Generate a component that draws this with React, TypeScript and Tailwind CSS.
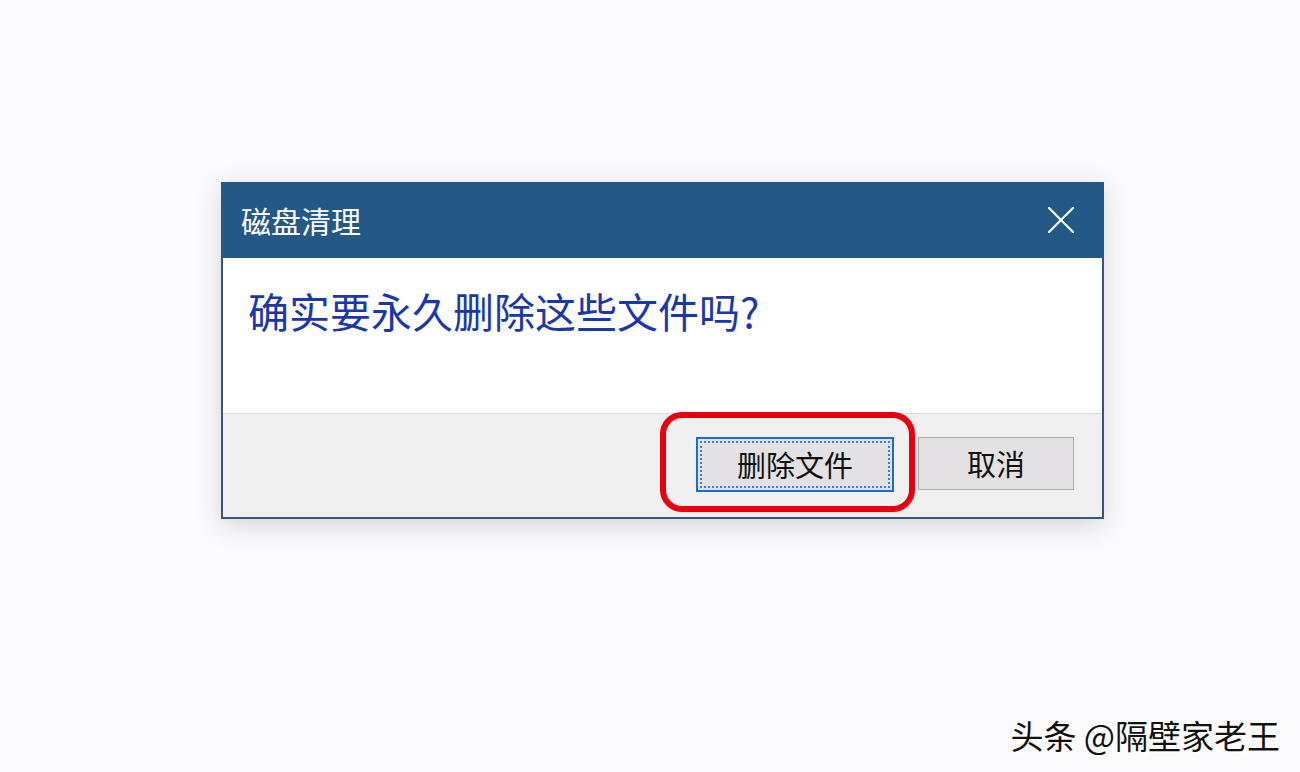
import React from 'react';

const font = { fontFamily: '"Noto Sans CJK SC", "Noto Sans", sans-serif' };

function CloseIcon() {
  return (
    <svg width="26" height="26" viewBox="0 0 26 26" fill="none">
      <path d="M1 1 L25 25 M25 1 L1 25" stroke="#ffffff" strokeWidth="2.2" strokeLinecap="round" />
    </svg>
  );
}

export default function App() {
  return (
    <div className="relative h-[772px] w-full overflow-hidden bg-[#fbfafc] pl-[221px] pt-[182px]" style={font}>
      <div className="relative w-[883px] border-2 border-t-0 border-[#35587a] shadow-[0_6px_24px_rgba(40,40,60,0.18)]">
        <div className="-mx-[2px] flex h-[76px] items-center justify-between bg-[#245885] pl-[20px] pr-[30px]">
          <span className="text-[30px] leading-none text-white">磁盘清理</span>
          <CloseIcon />
        </div>

        <div className="h-[155px] bg-white pl-[25px] pt-[28px]">
          <p className="text-[41px] leading-[1.2] text-[#1c38a8]">确实要永久删除这些文件吗?</p>
        </div>

        <div className="flex h-[104px] items-start justify-end gap-[24px] border-t border-[#dcdcdc] bg-[#f0f0f0] pr-[28px] pt-[23px]">
          <button className="relative flex h-[55px] w-[198px] items-center justify-center border-2 border-[#1a6cd2] bg-[#e3e1e3] text-[29px] leading-none text-[#111]">
            <span className="pointer-events-none absolute inset-[2px] border-2 border-dotted border-[#3a7fd8]" />
            删除文件
          </button>
          <button className="flex h-[53px] w-[156px] items-center justify-center border border-[#adadad] bg-[#e3e1e3] text-[29px] leading-none text-[#111]">
            取消
          </button>
        </div>

        <div className="pointer-events-none absolute left-[437px] top-[230px] h-[100px] w-[255px] rounded-[22px] border-[6px] border-[#e8000d]" />
      </div>

      <div className="absolute bottom-[20px] right-[20px] whitespace-nowrap text-[33px] leading-none text-[#111] [text-shadow:2px_2px_0_#ffffff,-1px_-1px_0_#ffffff]">
        头条 @隔壁家老王
      </div>
    </div>
  );
}
